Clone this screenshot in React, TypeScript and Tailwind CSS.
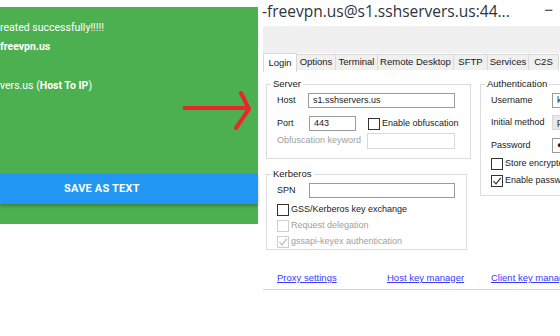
import React from 'react';

const ui = { fontFamily: '"Liberation Sans", Arial, sans-serif' };

function Check({ checked, disabled }: { checked?: boolean; disabled?: boolean }) {
  return (
    <span
      className={`w-[12px] h-[12px] shrink-0 border bg-white flex items-center justify-center ${
        disabled ? 'border-[#cfcfcf]' : 'border-[#333]'
      }`}
    >
      {checked && (
        <svg width="10" height="10" viewBox="0 0 10 10">
          <path
            d="M1.5 5.2 L4 7.8 L8.8 1.8"
            fill="none"
            stroke={disabled ? '#b8b8b8' : '#333'}
            strokeWidth="1.2"
          />
        </svg>
      )}
    </span>
  );
}

function Field({ w, children, gray }: { w: string; children?: React.ReactNode; gray?: boolean }) {
  return (
    <div
      className={`${w} h-[15px] border flex items-center px-[4px] overflow-hidden ${
        gray ? 'border-[#d9d9d9] bg-[#e9e9e9]' : 'border-[#9a9a9a] bg-white'
      }`}
    >
      {children}
    </div>
  );
}

const tabs = ['Login', 'Options', 'Terminal', 'Remote Desktop', 'SFTP', 'Services', 'C2S'];
const tabWidths = ['w-[34px]', 'w-[39px]', 'w-[42px]', 'w-[76px]', 'w-[34px]', 'w-[41px]', 'w-[30px]'];

export default function App() {
  return (
    <div className="relative w-[560px] h-[336px] bg-white flex overflow-hidden">
      {/* left: green result card */}
      <div className="w-[258px] shrink-0 pt-[7px]" style={{ fontFamily: 'Roboto, sans-serif' }}>
        <div className="h-[217px] bg-[#4caf50] text-white flex flex-col">
          <div className="mt-[14px] text-[10.5px] leading-[14px]">reated successfully!!!!!</div>
          <div className="mt-[5px] text-[10.5px] leading-[14px] font-bold">freevpn.us</div>
          <div className="mt-[25px] text-[10.5px] leading-[14px]">
            vers.us (<span className="font-bold">Host To IP</span>)
          </div>
          <div className="mt-[81px] h-[30px] bg-[#2196f3] shadow-[0_2px_3px_rgba(0,0,0,0.25)] flex items-center pl-[64px] text-[11px] font-bold tracking-[0.2px]">
            SAVE AS TEXT
          </div>
        </div>
      </div>

      {/* right: ssh client window */}
      <div className="ml-[4px] flex-1 min-w-0 flex flex-col text-[9px] text-[#1a1a1a] whitespace-nowrap" style={ui}>
        <div className="h-[26px] flex items-center justify-between pr-[7px]">
          <span className="text-[15.5px] leading-none text-[#2b3440] -mt-[2px]" style={{ fontFamily: '"Open Sans", sans-serif' }}>
            -freevpn.us@s1.sshservers.us:44...
          </span>
          <span className="text-[15px] text-[#333] -mt-[6px]">−</span>
        </div>
        <div className="h-[27px] bg-[#f0f0f0] ml-[1px]" />
        <div className="h-[19px] flex items-end ml-[1px] bg-white">
          {tabs.map((t, i) => (
            <div
              key={t}
              className={`${tabWidths[i]} shrink-0 flex items-center justify-center border-t border-r border-[#d9d9d9] text-[9.5px] ${
                i === 0 ? 'h-[19px] bg-white border-l' : 'h-[16px] bg-[#f0f0f0] mb-[2px]'
              }`}
            >
              {t}
            </div>
          ))}
        </div>

        <div className="flex mt-[6px]">
          <div className="ml-[4px] w-[201px] shrink-0 flex flex-col">
            <fieldset className="border border-[#dcdcdc] h-[81px] pl-[10px] pr-[11px] pt-[3px] flex flex-col">
              <legend className="px-[2px] ml-[-6px] leading-[12px] text-[9.5px]">Server</legend>
              <div className="flex items-center h-[15px]">
                <span className="w-[31px]">Host</span>
                <Field w="w-[147px]">s1.sshservers.us</Field>
              </div>
              <div className="flex items-center h-[15px] mt-[8px]">
                <span className="w-[32px]">Port</span>
                <Field w="w-[47px]">443</Field>
                <span className="ml-[12px] flex items-center gap-[2px]">
                  <Check />
                  <span>Enable obfuscation</span>
                </span>
              </div>
              <div className="flex items-center h-[16px] mt-[2px] text-[#a0a0a0]">
                <span className="w-[90px]">Obfuscation keyword</span>
                <div className="w-[88px] h-[16px] border border-[#d9d9d9]" />
              </div>
            </fieldset>

            <fieldset className="mt-[9px] border border-[#dcdcdc] h-[82px] pl-[10px] pr-[11px] pt-[3px] flex flex-col">
              <legend className="px-[2px] ml-[-6px] leading-[12px] text-[9.5px]">Kerberos</legend>
              <div className="flex items-center h-[15px]">
                <span className="w-[32px]">SPN</span>
                <Field w="w-[146px]" />
              </div>
              <div className="flex items-center gap-[2px] mt-[6px] h-[12px]">
                <Check />
                <span>GSS/Kerberos key exchange</span>
              </div>
              <div className="flex items-center gap-[2px] mt-[4px] h-[12px] text-[#a0a0a0]">
                <Check disabled />
                <span>Request delegation</span>
              </div>
              <div className="flex items-center gap-[2px] mt-[4px] h-[12px] text-[#a0a0a0]">
                <Check disabled checked />
                <span>gssapi-keyex authentication</span>
              </div>
            </fieldset>
          </div>

          <div className="ml-[13px] flex-1 min-w-0">
            <fieldset className="border border-r-0 border-[#dcdcdc] h-[118px] pl-[10px] pt-[3px] flex flex-col">
              <legend className="px-[2px] ml-[-6px] leading-[12px] text-[9.5px]">Authentication</legend>
              <div className="flex items-center h-[15px]">
                <span className="w-[61px] shrink-0">Username</span>
                <Field w="w-[60px] shrink-0">kevin</Field>
              </div>
              <div className="flex items-center h-[15px] mt-[7px]">
                <span className="w-[61px] shrink-0">Initial method</span>
                <Field w="w-[60px] shrink-0" gray>password</Field>
              </div>
              <div className="flex items-center h-[15px] mt-[8px]">
                <span className="w-[61px] shrink-0">Password</span>
                <Field w="w-[60px] shrink-0">●●●●●●</Field>
              </div>
              <div className="flex items-center gap-[2px] mt-[5px] h-[12px]">
                <Check />
                <span>Store encrypted password</span>
              </div>
              <div className="flex items-center gap-[2px] mt-[5px] h-[12px]">
                <Check checked />
                <span>Enable password change</span>
              </div>
            </fieldset>
          </div>
        </div>

        <div className="flex mt-[22px] h-[12px] items-center text-[#3a3aff] underline text-[9.5px]">
          <span className="ml-[15px] w-[110px] shrink-0">Proxy settings</span>
          <span className="w-[104px] shrink-0">Host key manager</span>
          <span className="shrink-0">Client key manager</span>
        </div>
        <div className="mt-[5px] ml-[1px] h-[1px] bg-[#d6d6d6]" />
      </div>

      {/* red arrow overlay */}
      <svg className="absolute left-[180px] top-[88px]" width="76" height="46" viewBox="0 0 76 46">
        <path d="M3 20 H68" stroke="#e8262b" strokeWidth="4" fill="none" />
        <path d="M61 5 L69 21 L56 40" stroke="#e8262b" strokeWidth="4" strokeLinecap="round" strokeLinejoin="round" fill="none" />
      </svg>
    </div>
  );
}
